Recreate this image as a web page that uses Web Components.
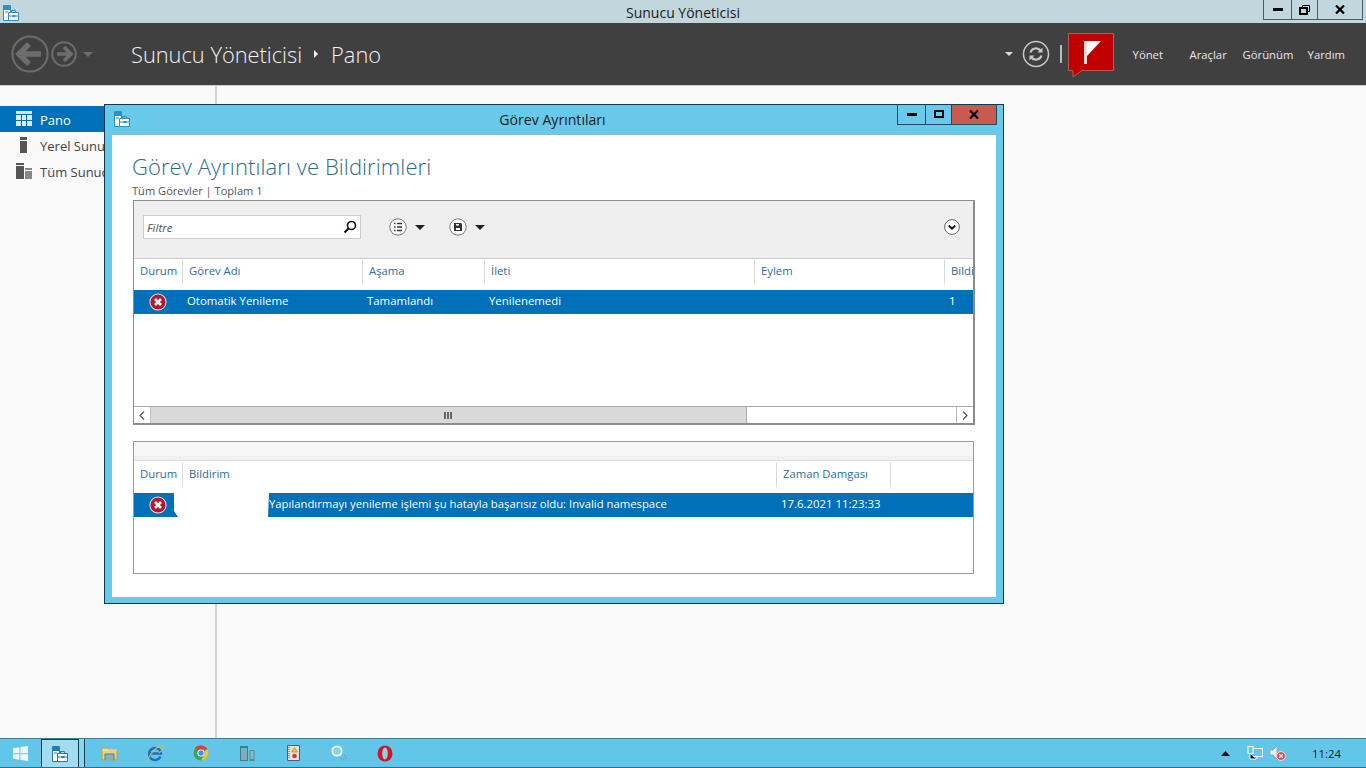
<!DOCTYPE html>
<html lang="tr"><head><meta charset="utf-8"><title>Sunucu Yöneticisi</title>
<style>
html,body{margin:0;padding:0;height:100%;overflow:hidden;font-family:"Open Sans","Noto Sans",sans-serif;font-size:12px;color:#222}
</style></head><body>
<sm-app>
  <sm-titlebar slot="top">Sunucu Yöneticisi</sm-titlebar>
  <sm-header slot="top"></sm-header>
  <sm-sidebar slot="side"></sm-sidebar>
  <sm-taskbar slot="bottom"></sm-taskbar>
  <task-window slot="float"></task-window>
</sm-app>
<script>
const SERVER_ICON = (c='#2f8fc4') => `<svg width="16" height="16" viewBox="0 0 16 16" style="display:block"><path d="M.5.5h7v15h-7z" fill="#fff" stroke="${c}"/><path d="M1 1h6v4H1z" fill="${c}"/><path d="M2 7h3" stroke="${c}" fill="none"/><path d="M5.500 7.500h10v8h-10z" fill="#fff" stroke="${c}"/><path d="M8.500 7.500v-2h4v2" fill="none" stroke="${c}"/><path d="M6 11h9" stroke="${c}"/><path d="M9.500 10h3v2h-3z" fill="${c}"/></svg>`;
const ERR_ICON = `<svg width="18" height="18" viewBox="0 0 18 18" class="err"><circle cx="9" cy="9" r="8.600" fill="#f3dfe1"/><circle cx="9" cy="9" r="7.600" fill="#b8152c"/><path d="M6 6l6 6M12 6l-6 6" stroke="#fff" stroke-width="2.600"/></svg>`;

function def(name, css, html){
  customElements.define(name, class extends HTMLElement{
    constructor(){super();const r=this.attachShadow({mode:'open'});r.innerHTML=`<style>${css}</style>${typeof html==='function'?html(this):html}`;}
  });
}

def('sm-app',`
:host{display:flex;flex-direction:column;width:1366px;height:768px;position:relative;background:#f9f9f9;overflow:hidden}
.mid{flex:1;display:flex;min-height:0}
.main{flex:1;background:#fafafa}
::slotted([slot=float]){position:absolute;left:104px;top:104px}
`,`<slot name="top"></slot><div class="mid"><slot name="side"></slot><div class="main"></div></div><slot name="bottom"></slot><slot name="float"></slot>`);

def('win-buttons',`
:host{display:flex;height:20px;box-sizing:border-box;border:1px solid var(--bd);border-top:0;color:#000}
span{display:flex;align-items:center;justify-content:center;border-right:1px solid var(--bd);box-sizing:border-box}
span:last-child{border-right:0;background:var(--close,transparent)}
.a{width:28px}.b{width:26px}.c{width:44px}
svg{display:block}
`,(h)=>`<span class="a"><svg width="10" height="3"><rect y="0" width="10" height="3" fill="#000"/></svg></span>
<span class="b">${h.hasAttribute('maxi')?'<svg width="10" height="9"><rect x="1" y="1" width="8" height="6" fill="none" stroke="#000" stroke-width="2"/></svg>':'<svg width="11" height="10"><path d="M3.500 2V.5h7v6H9" fill="none" stroke="#000"/><rect x="1" y="3" width="7" height="6" fill="none" stroke="#000" stroke-width="2"/></svg>'}</span>
<span class="c"><svg width="10" height="9"><path d="M1 .5l8 8M9 .5l-8 8" stroke="#000" stroke-width="2.200"/></svg></span>`);

def('sm-titlebar',`
:host{display:flex;height:23px;background:#c2d6de;position:relative;align-items:center;font-size:14px;line-height:23px;color:#1a1a1a;flex:none}
.ic{margin:0 0 0 3px;width:16px;padding-top:2px}
.t{position:absolute;left:0;right:0;text-align:center;top:1px}
win-buttons{--bd:#4a5a62;margin-left:auto;margin-right:3px;align-self:flex-start;position:relative}
`,`<div class="ic">${SERVER_ICON()}</div><div class="t"><slot></slot></div><win-buttons></win-buttons>`);

def('sm-header',`
:host{display:flex;height:63px;box-sizing:border-box;background:#404040;border-bottom:1px solid #cfcfcf;align-items:center;color:#fff;flex:none}
.nav{display:flex;align-items:center;margin-left:11px;width:120px}
.crumb{font-weight:300;font-size:21.800px;line-height:30px;display:flex;align-items:center;color:#f3f3f3;padding-top:2px;flex:1}
.crumb i{display:block;width:0;height:0;border-left:4px solid #fff;border-top:4px solid transparent;border-bottom:4px solid transparent;margin:0 13px 3px 12px}
.tools{display:flex;align-items:center}
.dd{width:0;height:0;border-top:4px solid #ddd;border-left:4px solid transparent;border-right:4px solid transparent}
.sep{width:2px;height:18px;background:#bbb;margin:0 6px 0 10px}
.flag{position:relative;margin-top:2px}
menu{display:flex;margin:0;padding:0;font-size:11.300px;color:#e8e8e8}
menu span{display:block}
`,`<div class="nav">
<svg width="38" height="38" viewBox="0 0 38 38"><circle cx="19" cy="19" r="17.600" fill="none" stroke="#6d6d6d" stroke-width="2"/><path d="M8 19h22M18 9L8 19l10 10" fill="none" stroke="#6d6d6d" stroke-width="5.500"/></svg>
<svg width="26" height="26" viewBox="0 0 26 26" style="margin-left:2px"><circle cx="13" cy="13" r="11.800" fill="none" stroke="#6d6d6d" stroke-width="2"/><path d="M20 13H6M13 6l7 7-7 7" fill="none" stroke="#6d6d6d" stroke-width="3.600"/></svg>
<span class="dd" style="border-top-color:#6d6d6d;border-left-width:5px;border-right-width:5px;border-top-width:5px;margin-left:6px"></span>
</div>
<div class="crumb">Sunucu Yöneticisi<i></i>Pano</div>
<div class="tools">
<span class="dd"></span>
<svg width="28" height="28" viewBox="0 0 28 28" style="margin-left:9px"><circle cx="14" cy="14" r="12.500" fill="none" stroke="#c8c8c8" stroke-width="1.500"/><path d="M8.500 12.500a5.800 5.800 0 0 1 10-2" fill="none" stroke="#c8c8c8" stroke-width="2.200"/><path d="M20.500 7.500v5h-5z" fill="#c8c8c8"/><path d="M19.500 15.500a5.800 5.800 0 0 1-10 2" fill="none" stroke="#c8c8c8" stroke-width="2.200"/><path d="M7.500 20.500v-5h5z" fill="#c8c8c8"/></svg>
<span class="sep"></span>
<svg class="flag" width="47" height="45" viewBox="0 0 47 45"><path d="M.5.5h45v37H14L5 44v-6.500H.5z" fill="#c00000" stroke="#b25a5a"/><path d="M16 8h3v23h-3z" fill="#f3dada"/><path d="M19 8h14L19 23z" fill="#fff"/></svg>
</div>
<menu style="margin-left:18px"><span style="width:57px">Yönet</span><span style="width:53px">Araçlar</span><span style="width:65px">Görünüm</span><span>Yardım</span></menu>
<div style="width:21px"></div>`);

def('sm-sidebar',`
:host{display:block;width:215px;border-right:2px solid #d2d2d2;box-sizing:content-box;padding-top:20px;flex:none;background:#f9f9f9}
div{display:flex;align-items:center;height:26px;font-size:13px;color:#444;padding-left:16px}
div span{margin-top:2px}
div.on{background:#0070b8;color:#fff}
svg{display:block;margin-right:8px;flex:none}
`,`<div class="on"><svg width="16" height="16" viewBox="0 0 16 16"><path fill="#cfe4f3" d="M0 0h16v3H0z"/><path fill="#dceaf5" d="M0 4h5v5H0zM6 4h4v5H6zM11 4h5v5h-5zM0 10h5v5H0zM6 10h4v5H6zM11 10h5v5h-5z"/></svg><span>Pano</span></div>
<div><svg width="16" height="16" viewBox="0 0 16 16"><path fill="#555" d="M4 0h7v3H4zM4 4h7v12H4z"/></svg><span>Yerel Sunucu</span></div>
<div><svg width="16" height="16" viewBox="0 0 16 16"><path fill="#555" d="M0 0h8v2H0zM0 3h8v13H0z"/><path fill="#888" d="M9 5h7v2H9zM9 8h7v8H9z"/></svg><span>Tüm Sunucular</span></div>`);

def('task-window',`
:host{display:flex;flex-direction:column;width:900px;height:500px;box-sizing:border-box;background:#68c9ea;border:1px solid #0e3a50;padding:0 7px 6px}
.bar{height:29px;display:flex;align-items:flex-start;position:relative;flex:none;border-bottom:1px solid #8fb9c8;font-size:14.100px;color:#1c1c1c}
.ic{position:absolute;left:2px;top:6px}
.ttl{flex:1;text-align:center;line-height:29px;margin-right:3px}
win-buttons{--bd:#1c4b5e;--close:#c75b50;position:absolute;right:-1px;top:0}
.body{flex:1;background:#fff;padding:16px 21px 22px 21px;display:flex;flex-direction:column;min-height:0}
h1{margin:0 0 0 -1px;font-weight:300;font-size:22px;line-height:30px;color:#2b6c88;letter-spacing:.08px}
p{margin:3px 0 1px -1px;font-size:11.100px;line-height:14px;color:#555;height:15px}
`,`<div class="bar"><div class="ic">${SERVER_ICON()}</div><div class="ttl">Görev Ayrıntıları</div><win-buttons maxi></win-buttons></div>
<div class="body"><h1>Görev Ayrıntıları ve Bildirimleri</h1><p>Tüm Görevler | Toplam 1</p>
<task-grid></task-grid><note-grid style="margin-top:16px"></note-grid></div>`);

const GRID_CSS = `
.hd,.row{display:grid;white-space:nowrap}
.hd{color:#2b6c9c;font-size:11.300px}
.hd span{display:block;overflow:hidden;padding-left:7px;line-height:22px;box-sizing:border-box;background:linear-gradient(#d8d8d8,#d8d8d8 20px,#f2f2f2) left top/1px 26px no-repeat}
.hd span:first-child{background:none;padding-left:6px}
.row{background:#0070b8;color:#fff;height:24px;line-height:22px;font-size:11.400px}
.row span{display:block;overflow:hidden;padding-left:5px;box-sizing:border-box}
.err{display:block;margin:3px 0 0 10px}
`;

def('task-grid',`
:host{display:flex;flex-direction:column;height:225px;box-sizing:border-box;border:1px solid #8c8c8c;border-width:1px 2px 2px 1px;background:#fff;overflow:hidden;flex:none;width:842px}
.tb{height:58px;box-sizing:border-box;background:#efefef;border-bottom:1px solid #ccc;display:flex;align-items:center;padding:0 13px 5px 9px;flex:none}
.f{width:218px;height:24px;box-sizing:border-box;background:#fff;border:1px solid #ccc;display:flex;align-items:center;padding:0 3px;font-style:italic;font-size:11.600px;color:#555;justify-content:space-between}
.tb .g{display:flex;align-items:center}
.tri{width:0;height:0;border-top:5px solid #222;border-left:5px solid transparent;border-right:5px solid transparent;margin-left:8px}
.gap{flex:1}
.list{flex:1;min-height:0;overflow:hidden;background:#fff}
${GRID_CSS}
.hd{grid-template-columns:48px 180px 122px 270px 190px 60px;height:31px;padding-top:1px;box-sizing:border-box}
.row{grid-template-columns:48px 180px 122px 270px 190px 60px}
.sb{height:17px;flex:none;border-top:1px solid #aaa;display:flex;background:#fff;position:relative;box-sizing:border-box}
.sb b{display:flex;align-items:center;justify-content:center;width:17px;border-right:1px solid #bbb;box-sizing:border-box}
.sb b:last-child{border:0;border-left:1px solid #bbb;margin-left:auto}
.th{width:596px;background:#d9d9d9;border-right:1px solid #aaa;box-sizing:border-box;display:flex;justify-content:center;align-items:center}
`,`<div class="tb"><div class="f">Filtre<svg width="14" height="14" viewBox="0 0 14 14"><circle cx="8.500" cy="5.500" r="4" fill="none" stroke="#111" stroke-width="1.600"/><path d="M5.500 8.500L1.500 12.500" stroke="#111" stroke-width="2.200"/></svg></div>
<div class="g" style="margin-left:28px"><svg width="18" height="18" viewBox="0 0 18 18"><circle cx="9" cy="9" r="8.200" fill="#fff" stroke="#777"/><path d="M5 5.500h1.500M5 9h1.500M5 12.500h1.500M8 5.500h5M8 9h5M8 12.500h5" stroke="#333" stroke-width="1.600"/></svg><span class="tri"></span></div>
<div class="g" style="margin-left:24px"><svg width="18" height="18" viewBox="0 0 18 18"><circle cx="9" cy="9" r="8.200" fill="#fff" stroke="#777"/><path d="M5 5h7l1 1v7H5z" fill="#333"/><path d="M7 6h3v1.500H7zM7 10h4v2H7z" fill="#fff"/></svg><span class="tri"></span></div>
<div class="gap"></div><svg width="16" height="16" viewBox="0 0 16 16"><circle cx="8" cy="8" r="7.400" fill="#fff" stroke="#666"/><path d="M4.800 6.500L8 9.700l3.200-3.200" fill="none" stroke="#111" stroke-width="1.800"/></svg></div>
<div class="list"><div class="hd"><span>Durum</span><span>Görev Adı</span><span>Aşama</span><span>İleti</span><span>Eylem</span><span>Bildirim</span></div>
<div class="row"><span>${ERR_ICON}</span><span>Otomatik Yenileme</span><span>Tamamlandı</span><span>Yenilenemedi</span><span></span><span>1</span></div></div>
<div class="sb"><b><svg width="6" height="9"><path d="M5 .5L1 4.500l4 4" fill="none" stroke="#555" stroke-width="1.200"/></svg></b><div class="th"><svg width="9" height="7"><path d="M1 0v7M4 0v7M7 0v7" stroke="#444" stroke-width="1.500"/></svg></div><b><svg width="6" height="9"><path d="M1 .5l4 4-4 4" fill="none" stroke="#555" stroke-width="1.200"/></svg></b></div>`);

def('note-grid',`
:host{display:flex;flex-direction:column;height:133px;width:841px;box-sizing:border-box;border:1px solid #9a9a9a;background:#fff;overflow:hidden;flex:none}
.strip{height:19px;box-sizing:border-box;background:linear-gradient(#f7f7f7 0,#f7f7f7 14px,#efefef 14px);border-bottom:1px solid #ddd;flex:none}
${GRID_CSS}
.hd{grid-template-columns:48px 594px 114px 83px;height:32px;padding-top:2px;box-sizing:border-box}
.row{grid-template-columns:44px 90px 508px 197px;background:none;color:#fff}
.row span{background:#0070b8}
.row .w{background:#fff}
.row .i{clip-path:polygon(0 0,40px 0,40px 18px,44px 100%,0 100%)}
.row .m{padding-left:1px;font-size:11.300px;clip-path:polygon(1px 0,100% 0,100% 100%,0 100%)}
`,`<div class="strip"></div><div class="hd"><span>Durum</span><span>Bildirim</span><span>Zaman Damgası</span><span></span></div>
<div class="row"><span class="i">${ERR_ICON}</span><span class="w"></span><span class="m">Yapılandırmayı yenileme işlemi şu hatayla başarısız oldu: Invalid namespace</span><span class="d">17.6.2021 11:23:33</span></div>`);

def('sm-taskbar',`
:host{display:flex;height:30px;box-sizing:border-box;background:#63c6e8;border-top:1px solid #3a7f99;border-bottom:1px solid #2f6d85;align-items:center;flex:none;position:relative}
.start{width:41px;display:flex;justify-content:center;flex:none}
.act{width:38px;height:28px;background:#a3dcf1;border:1px solid #12404f;box-sizing:border-box;display:flex;align-items:center;justify-content:center;flex:none;border-bottom:0}
.sp{width:5px;height:28px;border-right:1px solid #12404f;background:#8ed3ec;box-sizing:content-box;flex:none}
.apps{display:flex;align-items:center;margin-left:1px}
.apps span{width:46px;display:flex;justify-content:center}
.tray{margin-left:auto;display:flex;align-items:center;padding-right:25px;color:#1a1a1a;font-size:11.400px}
svg{display:block}
`,`<div class="start"><svg width="15" height="15" viewBox="0 0 15 15"><path fill="#f2f8fb" d="M0 2.200l6.400-1v6H0zM7.400 1L15 0v7.200H7.400zM0 8.200h6.400v5.600l-6.400-1zM7.400 8.200H15V15l-7.600-1.200z"/></svg></div>
<div class="act">${SERVER_ICON('#1f7fb5')}</div><div class="sp"></div>
<div class="apps">
<span><svg width="17" height="16" viewBox="0 0 17 16"><path d="M1 3h6l1 2h8v10H1z" fill="#e9d27c" stroke="#b59d4a"/><path d="M4 15V9h9v6" fill="#7fb3c9" stroke="#4c7f95"/><path d="M1 5h15" stroke="#f5e9b5"/></svg></span>
<span><svg width="18" height="18" viewBox="0 0 18 18"><path d="M14.500 12.500A6 6 0 1 1 15 9.500H4.500" fill="none" stroke="#1f6fc0" stroke-width="2.300"/><path d="M1.500 16C5 8 12 1 17 2c1 3-3 6-4 7" fill="none" stroke="#d6b84a" stroke-width="1.100"/></svg></span>
<span><svg width="16" height="16" viewBox="0 0 16 16"><circle cx="8" cy="8" r="7.500" fill="#3aa655"/><path d="M8 .5A7.500 7.500 0 0 1 14.500 4.300H8A3.700 3.700 0 0 0 4.700 6L2 2.800A7.500 7.500 0 0 1 8 .5z" fill="#d9443a"/><path d="M14.500 4.300A7.500 7.500 0 0 1 8 15.500L11.200 10A3.700 3.700 0 0 0 11.500 6z" fill="#f4c430"/><circle cx="8" cy="8" r="3.600" fill="#fff"/><circle cx="8" cy="8" r="2.700" fill="#4b8bf0"/></svg></span>
<span><svg width="15" height="15" viewBox="0 0 15 15"><path d="M0 0h8v15H0z" fill="#3e7d8c"/><path d="M1 3h6M1 5h6M1 7h6M1 9h6M1 11h6M1 13h6" stroke="#bfe0e4"/><path d="M9.500 4h5v11h-5z" fill="#4f8f9c"/><path d="M10.500 6h3M10.500 8h3M10.500 10h3M10.500 12h3" stroke="#c6e4e8"/></svg></span>
<span><svg width="13" height="16" viewBox="0 0 13 16"><path d="M.5.5h12v15H.5z" fill="#e6e2d6" stroke="#4a5a8c"/><path d="M2 2v12" stroke="#4a5a8c" stroke-dasharray="1 1"/><path d="M7.500 2.500l3 4.500h-6z" fill="#e7c23c" stroke="#a8861a" stroke-width=".6"/><circle cx="7.500" cy="11" r="2.300" fill="#c9413d"/></svg></span>
<span><svg width="16" height="16" viewBox="0 0 16 16"><circle cx="6" cy="6" r="4.700" fill="#8fd0e6" stroke="#eef6f9" stroke-width="1.800"/><path d="M9 9l2 2" stroke="#eef6f9" stroke-width="1.800"/><circle cx="12.500" cy="12.500" r="2.300" fill="none" stroke="#7d9dab" stroke-width="1.500" stroke-dasharray="1.500 1"/></svg></span>
<span><svg width="16" height="17" viewBox="0 0 16 17"><ellipse cx="8" cy="8.500" rx="7.500" ry="8" fill="#d3152a"/><ellipse cx="8" cy="8.500" rx="2.800" ry="6" fill="#8fd0e6"/></svg></span>
</div>
<div class="tray"><svg width="9" height="5" style="margin-right:17px"><path d="M0 5l4.500-5L9 5z" fill="#111"/></svg>
<svg width="16" height="15" viewBox="0 0 16 15" style="margin-right:6px"><rect x="4.500" y="2.500" width="11" height="8" fill="none" stroke="#fff"/><rect x="1" y=".5" width="5" height="7" fill="#63c6e8" stroke="#fff"/><path d="M3 8v5h6M10 11v2" stroke="#fff"/></svg>
<svg width="17" height="16" viewBox="0 0 17 16" style="margin-right:26px"><path d="M1 5h3l4-4v13l-4-4H1z" fill="#e8f2f6" stroke="#9ab"/><circle cx="12" cy="11" r="4.400" fill="#e04848" stroke="#fbdede"/><path d="M10.200 9.200l3.600 3.600M13.800 9.200l-3.600 3.600" stroke="#fff" stroke-width="1.300"/></svg>
<span>11:24</span></div>`);
</script>
</body></html>
